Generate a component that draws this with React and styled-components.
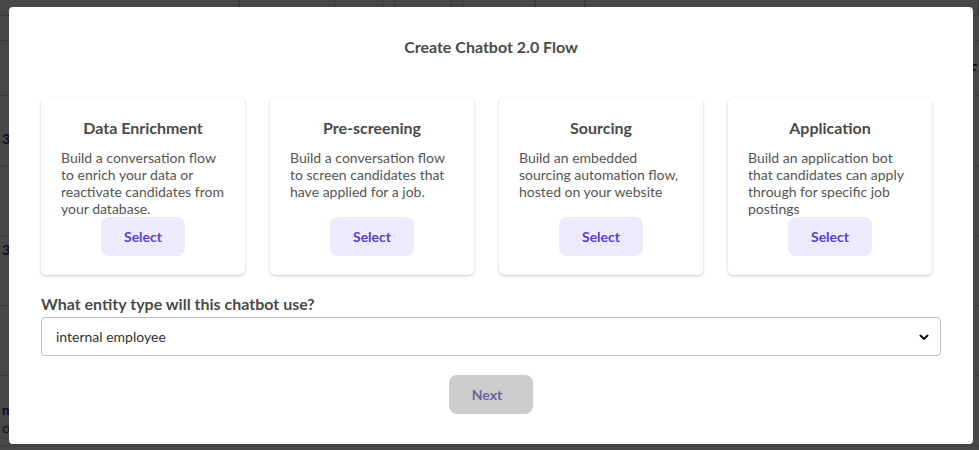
import styled, { createGlobalStyle } from 'styled-components';

const GlobalStyle = createGlobalStyle`
  html, body {
    margin: 0;
    padding: 0;
    background: #ffffff;
    font-family: Lato, "Noto Sans", sans-serif;
  }
  * {
    box-sizing: border-box;
  }
`;

const Page = styled('div')`
  width: 979px;
  height: 450px;
  overflow: hidden;
  position: relative;
  background: #ffffff;
`;

const TopBar = styled('div')`
  height: 16px;
  border-bottom: 1px solid #c8c8c8;
  display: grid;
  grid-template-columns: 240px 95px 48px 12px 57px 11px 73px 49px 1fr;
`;

const TopCell = styled('div')`
  border-right: 1px solid #c8c8c8;
`;

const Row = styled('div')`
  height: ${p => p.$h}px;
  border-bottom: 1px solid #dcdcdc;
  display: flex;
  align-items: ${p => p.$align || 'center'};
  justify-content: space-between;
  padding: ${p => p.$pad || '0 2px'};
  font-size: 14px;
  color: #2b2ba8;
  font-weight: 700;
`;

const RowStart = styled('div')`
  display: flex;
  flex-direction: column;
  line-height: 18px;
`;

const RowSub = styled('span')`
  color: #555;
  font-weight: 400;
`;

const RowEnd = styled('span')`
  color: #333;
  font-weight: 700;
  font-size: 16px;
`;

const Overlay = styled('div')`
  position: absolute;
  inset: 0;
  background: rgba(0, 0, 0, 0.72);
  padding: 7px 6px 6px 9px;
`;

const Modal = styled('div')`
  width: 964px;
  background: #ffffff;
  border-radius: 4px;
  padding: 31px 32px 30px;
  display: flex;
  flex-direction: column;
  color: #4a4a4a;
`;

const Title = styled('h2')`
  margin: 0;
  text-align: center;
  font-size: 16px;
  font-weight: 700;
  line-height: 18px;
  color: #4a4a4a;
`;

const Cards = styled('div')`
  display: grid;
  grid-template-columns: repeat(4, 204px);
  gap: 25px;
  margin-top: 42px;
`;

const Card = styled('div')`
  height: 177px;
  border-radius: 5px;
  background: #fff;
  box-shadow: 0 1px 3px rgba(0, 0, 0, 0.22);
  padding: 20px 20px 0;
  display: flex;
  flex-direction: column;
`;

const CardTitle = styled('h3')`
  margin: 0;
  text-align: center;
  font-size: 16px;
  font-weight: 700;
  line-height: 20px;
  color: #4a4a4a;
`;

const CardText = styled('p')`
  margin: 11px 0 0;
  font-size: 14px;
  line-height: 17px;
  color: #555555;
  height: 68px;
`;

const SelectButton = styled('button')`
  align-self: center;
  width: 84px;
  height: 39px;
  border: none;
  border-radius: 8px;
  background: #eeeafd;
  color: #5a3fcf;
  font-family: inherit;
  font-size: 14px;
  font-weight: 700;
  cursor: pointer;
`;

const Label = styled('label')`
  margin-top: 20px;
  font-size: 16px;
  font-weight: 700;
  line-height: 18px;
  color: #4a4a4a;
`;

const SelectBox = styled('div')`
  margin-top: 4px;
  width: 900px;
  height: 39px;
  flex-shrink: 0;
  border: 1px solid #bdbdbd;
  border-radius: 4px;
  display: flex;
  align-items: center;
  justify-content: space-between;
  padding: 0 10px 0 14px;
  font-size: 14px;
  color: #333333;
`;

const Footer = styled('div')`
  margin-top: 19px;
  display: flex;
  justify-content: center;
`;

const NextButton = styled('button')`
  width: 84px;
  height: 39px;
  border: none;
  border-radius: 8px;
  background: #cccccc;
  color: #6d63a0;
  font-family: inherit;
  font-size: 14px;
  font-weight: 700;
  padding: 0 8px 0 0;
`;

const flows = [
  {
    title: 'Data Enrichment',
    text: 'Build a conversation flow to enrich your data or reactivate candidates from your database.',
  },
  {
    title: 'Pre-screening',
    text: 'Build a conversation flow to screen candidates that have applied for a job.',
  },
  {
    title: 'Sourcing',
    text: 'Build an embedded sourcing automation flow, hosted on your website',
  },
  {
    title: 'Application',
    text: 'Build an application bot that candidates can apply through for specific job postings',
  },
];

const rows = [
  { h: 25, start: '', end: '' },
  { h: 55, start: '', end: 'F' },
  { h: 70, start: '3', end: '', align: 'flex-end', pad: '0 2px 17px' },
  { h: 70, start: '', end: '' },
  { h: 70, start: '3,', end: '', align: 'flex-start', pad: '5px 2px 0' },
  { h: 70, start: '', end: '' },
  { h: 70, start: 'm', sub: 'or', end: '', align: 'flex-start', pad: '25px 2px 0' },
];

export default function App() {
  return (
    <>
      <GlobalStyle />
      <Page>
        <TopBar>
          {Array.from({ length: 9 }).map((_, i) => (
            <TopCell key={i} />
          ))}
        </TopBar>
        {rows.map((row, i) => (
          <Row key={i} $h={row.h} $align={row.align} $pad={row.pad}>
            <RowStart>
              <span>{row.start}</span>
              {row.sub && <RowSub>{row.sub}</RowSub>}
            </RowStart>
            <RowEnd>{row.end}</RowEnd>
          </Row>
        ))}
        <Overlay>
          <Modal>
            <Title>Create Chatbot 2.0 Flow</Title>
            <Cards>
              {flows.map(flow => (
                <Card key={flow.title}>
                  <CardTitle>{flow.title}</CardTitle>
                  <CardText>{flow.text}</CardText>
                  <SelectButton>Select</SelectButton>
                </Card>
              ))}
            </Cards>
            <Label>What entity type will this chatbot use?</Label>
            <SelectBox>
              <span>internal employee</span>
              <svg width="12" height="12" viewBox="0 0 24 24" fill="none" stroke="#111" strokeWidth="4" strokeLinecap="round" strokeLinejoin="round">
                <polyline points="5 9 12 16 19 9" />
              </svg>
            </SelectBox>
            <Footer>
              <NextButton>Next</NextButton>
            </Footer>
          </Modal>
        </Overlay>
      </Page>
    </>
  );
}
